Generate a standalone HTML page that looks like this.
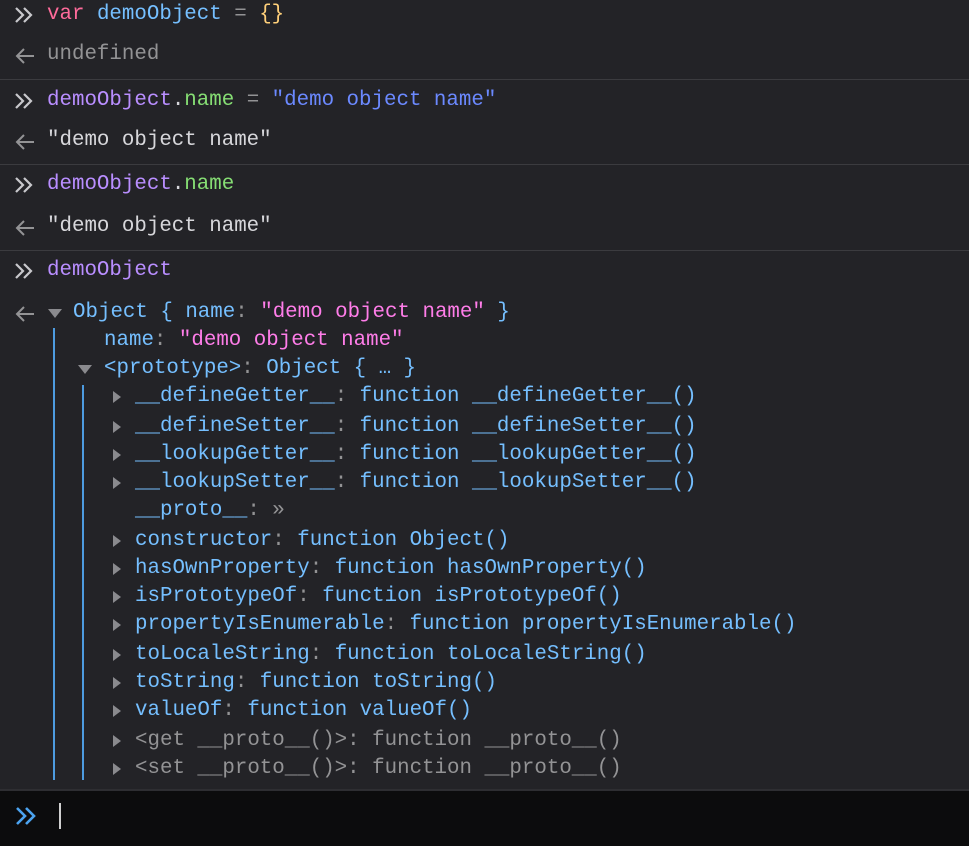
<!DOCTYPE html>
<html><head><style>
body{margin:0;width:969px;height:844px;background:#232327;overflow:hidden;position:relative;font-family:"Liberation Mono","DejaVu Sans Mono",monospace;font-size:20.8px;color:#d7d7db}
.l{position:absolute;height:28px;line-height:28px;white-space:pre}
.sep{position:absolute;left:0;width:969px;height:1px;background:#3b3b3f}
.b{color:#75bfff}.p{color:#ff7de9}.g{color:#939395}.pu{color:#b98eff}.gr{color:#86de74}.sb{color:#6b89ff}.r{color:#ff6b9b}.y{color:#ffd07a}
.vl{position:absolute;width:2px;background:#4d9be0}
.tr{position:absolute;width:0;height:0;border-top:6px solid transparent;border-bottom:6px solid transparent;border-left:8px solid #8a8a8e}
.td{position:absolute;width:0;height:0;border-left:7px solid transparent;border-right:7px solid transparent;border-top:9px solid #8a8a8e}
</style></head><body>
<svg style="position:absolute;left:14px;top:6px" width="22" height="18"><path d="M2 2l7 7-7 7M10 2l7 7-7 7" stroke="#c8c8cc" stroke-width="2.2" fill="none"/></svg>
<div class="l" style="left:47px;top:1px"><span class="r">var</span> <span class="b">demoObject</span> <span class="g">=</span> <span class="y">{}</span></div>
<svg style="position:absolute;left:14px;top:47px" width="22" height="18"><path d="M20 9H3M10 2L3 9l7 7" stroke="#939395" stroke-width="2" fill="none"/></svg>
<div class="l g" style="left:47px;top:41px">undefined</div>
<div class="sep" style="top:79px"></div>
<svg style="position:absolute;left:14px;top:92px" width="22" height="18"><path d="M2 2l7 7-7 7M10 2l7 7-7 7" stroke="#c8c8cc" stroke-width="2.2" fill="none"/></svg>
<div class="l" style="left:47px;top:87px"><span class="pu">demoObject</span>.<span class="gr">name</span> <span class="g">=</span> <span class="sb">"demo object name"</span></div>
<svg style="position:absolute;left:14px;top:133px" width="22" height="18"><path d="M20 9H3M10 2L3 9l7 7" stroke="#939395" stroke-width="2" fill="none"/></svg>
<div class="l" style="left:47px;top:127px">"demo object name"</div>
<div class="sep" style="top:164px"></div>
<svg style="position:absolute;left:14px;top:176px" width="22" height="18"><path d="M2 2l7 7-7 7M10 2l7 7-7 7" stroke="#c8c8cc" stroke-width="2.2" fill="none"/></svg>
<div class="l" style="left:47px;top:171px"><span class="pu">demoObject</span>.<span class="gr">name</span></div>
<svg style="position:absolute;left:14px;top:219px" width="22" height="18"><path d="M20 9H3M10 2L3 9l7 7" stroke="#939395" stroke-width="2" fill="none"/></svg>
<div class="l" style="left:47px;top:213px">"demo object name"</div>
<div class="sep" style="top:250px"></div>
<svg style="position:absolute;left:14px;top:262px" width="22" height="18"><path d="M2 2l7 7-7 7M10 2l7 7-7 7" stroke="#c8c8cc" stroke-width="2.2" fill="none"/></svg>
<div class="l pu" style="left:47px;top:257px">demoObject</div>
<svg style="position:absolute;left:14px;top:305px" width="22" height="18"><path d="M20 9H3M10 2L3 9l7 7" stroke="#939395" stroke-width="2" fill="none"/></svg>
<div class="td" style="left:48px;top:309px"></div>
<div class="l b" style="left:73px;top:299px">Object { name<span class="g">:</span> <span class="p">"demo object name"</span> }</div>
<div class="vl" style="left:53px;top:328px;height:452px"></div>
<div class="l b" style="left:104px;top:327px">name<span class="g">:</span> <span class="p">"demo object name"</span></div>
<div class="td" style="left:78px;top:365px"></div>
<div class="l b" style="left:104px;top:355px">&lt;prototype&gt;<span class="g">:</span> Object { … }</div>
<div class="vl" style="left:82px;top:385px;height:395px"></div>
<div class="tr" style="left:113px;top:391px"></div><div class="l b" style="left:135px;top:383px">__defineGetter__<span class="g">:</span> function __defineGetter__()</div>
<div class="tr" style="left:113px;top:421px"></div><div class="l b" style="left:135px;top:413px">__defineSetter__<span class="g">:</span> function __defineSetter__()</div>
<div class="tr" style="left:113px;top:449px"></div><div class="l b" style="left:135px;top:441px">__lookupGetter__<span class="g">:</span> function __lookupGetter__()</div>
<div class="tr" style="left:113px;top:477px"></div><div class="l b" style="left:135px;top:469px">__lookupSetter__<span class="g">:</span> function __lookupSetter__()</div>
<div class="l b" style="left:135px;top:497px">__proto__<span class="g">: »</span></div>
<div class="tr" style="left:113px;top:535px"></div><div class="l b" style="left:135px;top:527px">constructor<span class="g">:</span> function Object()</div>
<div class="tr" style="left:113px;top:563px"></div><div class="l b" style="left:135px;top:555px">hasOwnProperty<span class="g">:</span> function hasOwnProperty()</div>
<div class="tr" style="left:113px;top:591px"></div><div class="l b" style="left:135px;top:583px">isPrototypeOf<span class="g">:</span> function isPrototypeOf()</div>
<div class="tr" style="left:113px;top:619px"></div><div class="l b" style="left:135px;top:611px">propertyIsEnumerable<span class="g">:</span> function propertyIsEnumerable()</div>
<div class="tr" style="left:113px;top:649px"></div><div class="l b" style="left:135px;top:641px">toLocaleString<span class="g">:</span> function toLocaleString()</div>
<div class="tr" style="left:113px;top:677px"></div><div class="l b" style="left:135px;top:669px">toString<span class="g">:</span> function toString()</div>
<div class="tr" style="left:113px;top:705px"></div><div class="l b" style="left:135px;top:697px">valueOf<span class="g">:</span> function valueOf()</div>
<div class="tr" style="left:113px;top:735px"></div><div class="l g" style="left:135px;top:727px">&lt;get __proto__()&gt;: function __proto__()</div>
<div class="tr" style="left:113px;top:763px"></div><div class="l g" style="left:135px;top:755px">&lt;set __proto__()&gt;: function __proto__()</div>
<div style="position:absolute;left:0;top:789px;width:969px;height:55px;background:#0c0c0d;border-top:2px solid #2e2e32"></div>
<svg style="position:absolute;left:14px;top:806px" width="26" height="20"><path d="M3 2l8 8-8 8M12 2l8 8-8 8" stroke="#4ba3f0" stroke-width="2.6" fill="none"/></svg>
<div style="position:absolute;left:59px;top:803px;width:2px;height:26px;background:#d0d0d0"></div>
</body></html>
